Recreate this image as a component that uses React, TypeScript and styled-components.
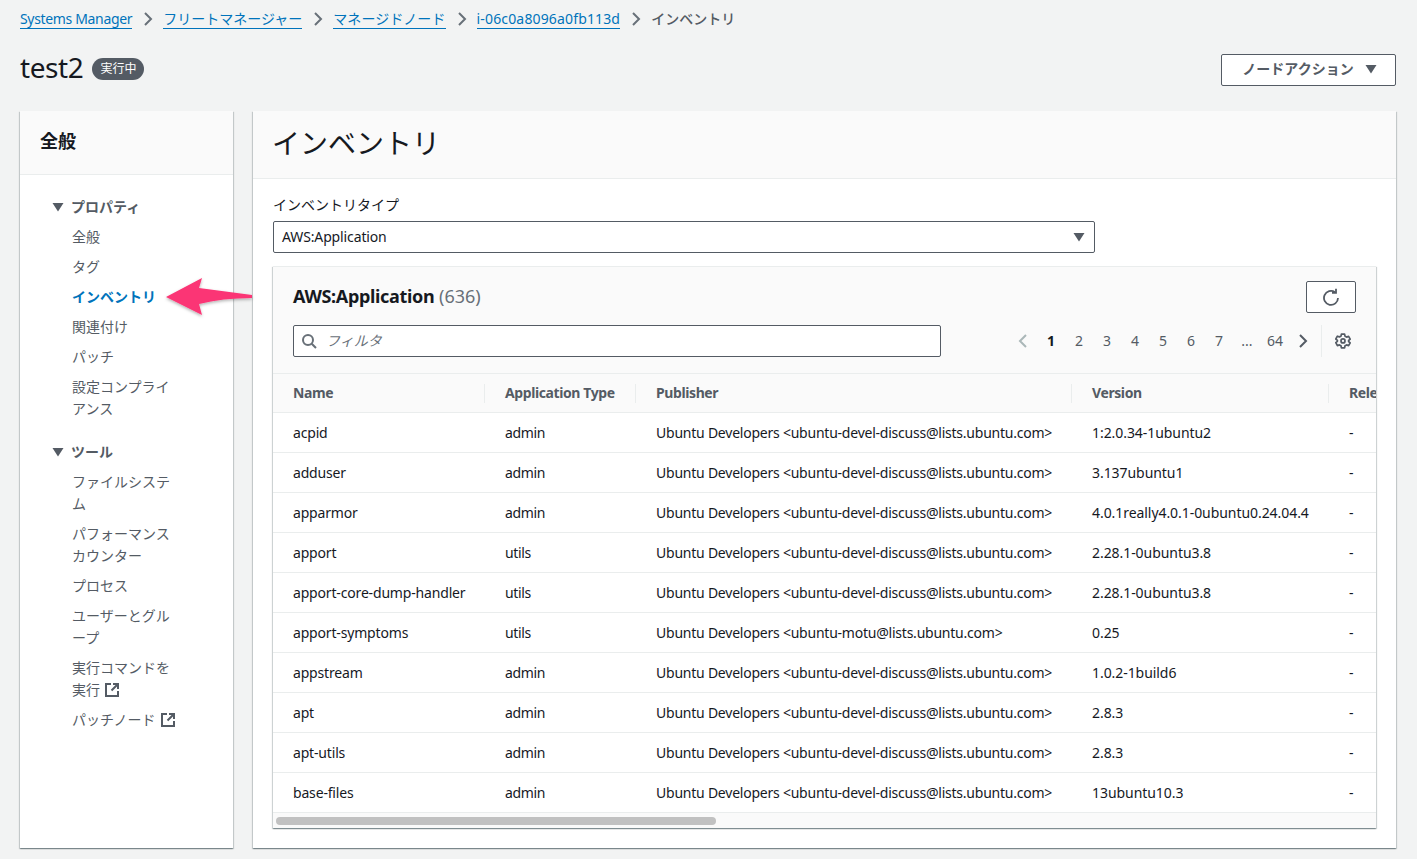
import React from 'react';
import styled, { createGlobalStyle } from 'styled-components';

const FONT = `"Noto Sans", "Noto Sans CJK JP", sans-serif`;

const Global = createGlobalStyle`
  html, body { margin: 0; padding: 0; background: #f2f3f3; }
  body { font-family: ${FONT}; font-size: 14px; line-height: 20px; color: #16191f; overflow: hidden; }
  * { box-sizing: border-box; }
`;

const Page = styled.div`
  width: 1417px;
  height: 859px;
  padding: 9px 21px 0 20px;
  position: relative;
  display: flex;
  flex-direction: column;
`;

const Crumbs = styled.nav`
  display: flex;
  align-items: center;
  height: 20px;
`;
const CrumbLink = styled.a<{ $spacing?: number }>`
  color: #0073bb;
  font-size: 14px;
  line-height: 19px;
  letter-spacing: ${p => p.$spacing ?? 0}px;
  border-bottom: 1px solid #0073bb;
  white-space: nowrap;
`;
const CrumbCurrent = styled.span`
  color: #545b64;
  font-size: 14px;
  font-weight: 500;
  white-space: nowrap;
`;
const CrumbSep = styled.svg`
  width: 16px;
  height: 16px;
  margin: 0 7px 0 8px;
  fill: none;
  stroke: #687078;
  stroke-width: 2;
`;

const TitleRow = styled.div`
  display: flex;
  align-items: center;
  justify-content: space-between;
  height: 32px;
  margin-top: 24px;
`;
const TitleLeft = styled.div`
  display: flex;
  align-items: center;
  gap: 9px;
  padding-bottom: 3px;
`;
const Title = styled.h1`
  margin: 0;
  font-size: 28px;
  line-height: 36px;
  font-weight: 400;
  letter-spacing: -0.4px;
  color: #16191f;
  position: relative;
  top: -1px;
`;
const Badge = styled.span`
  background: #545b64;
  color: #fff;
  font-size: 12px;
  line-height: 21px;
  height: 22px;
  margin-top: 2px;
  padding: 0 8px;
  border-radius: 11px;
`;
const ActionButton = styled.button`
  width: 175px;
  height: 32px;
  margin-top: 2px;
  padding: 0 0 2px 2px;
  background: #fff;
  border: 1px solid #545b64;
  border-radius: 2px;
  color: #545b64;
  font: 700 14px/20px ${FONT};
  display: flex;
  align-items: center;
  justify-content: center;
  gap: 11px;
`;
const Caret = styled.svg<{ $size?: number }>`
  width: ${p => p.$size ?? 12}px;
  height: ${p => p.$size ?? 12}px;
  fill: #545b64;
  flex: none;
`;

const Columns = styled.div`
  display: flex;
  gap: 20px;
  margin-top: 26px;
  height: 737px;
`;
const Card = styled.section`
  background: #fff;
  box-shadow: 0 1px 1px 0 rgba(0, 28, 36, 0.3), 1px 1px 1px 0 rgba(0, 28, 36, 0.15), -1px 1px 1px 0 rgba(0, 28, 36, 0.15);
  display: flex;
  flex-direction: column;
  overflow: hidden;
`;
const Side = styled(Card)`
  width: 213px;
  flex: none;
`;
const Main = styled(Card)`
  flex: 1;
  min-width: 0;
`;
const SideHead = styled.div`
  height: 64px;
  background: #fafafa;
  border-bottom: 1px solid #eaeded;
  padding: 0 20px 4px;
  display: flex;
  align-items: center;
  font-size: 18px;
  font-weight: 700;
  color: #16191f;
`;
const SideBody = styled.div`
  padding: 21px 0 0 32px;
`;
const GroupTitle = styled.div`
  display: flex;
  align-items: center;
  gap: 7px;
  font-weight: 700;
  color: #545b64;
  font-size: 14px;
  line-height: 22px;
`;
const NavList = styled.ul`
  list-style: none;
  margin: 0 0 17px;
  padding: 4px 0 0 20px;
  width: 125px;
`;
const NavItem = styled.li<{ $active?: boolean; $nowrap?: boolean }>`
  font-size: 14px;
  line-height: 22px;
  padding: 4px 0;
  color: ${p => (p.$active ? '#0073bb' : '#545b64')};
  font-weight: ${p => (p.$active ? 700 : 400)};
  white-space: ${p => (p.$nowrap ? 'nowrap' : 'normal')};
`;
const ExtIcon = styled.svg`
  width: 16px;
  height: 16px;
  display: inline-block;
  vertical-align: -3px;
  margin-left: 4px;
  fill: none;
  stroke: #545b64;
  stroke-width: 2;
`;

const MainHead = styled.div`
  height: 68px;
  background: #fafafa;
  border-bottom: 1px solid #eaeded;
  padding: 0 20px 4px;
  display: flex;
  align-items: center;
`;
const MainTitle = styled.h2`
  margin: 0 0 0 -1px;
  font-size: 28px;
  line-height: 36px;
  font-weight: 400;
  color: #16191f;
`;
const MainBody = styled.div`
  padding: 16px 20px 0;
  display: flex;
  flex-direction: column;
`;
const Label = styled.label`
  font-size: 14px;
  line-height: 20px;
  color: #16191f;
`;
const SelectBox = styled.div`
  margin-top: 6px;
  width: 822px;
  height: 32px;
  background: #fff;
  border: 1px solid #545b64;
  border-radius: 2px;
  display: flex;
  align-items: center;
  justify-content: space-between;
  padding: 0 9px 0 8px;
  font-size: 14px;
  letter-spacing: -0.13px;
  color: #16191f;
`;
const TableCard = styled.div`
  margin-top: 13px;
  width: 1103px;
  height: 562px;
  background: #fff;
  box-shadow: 0 1px 1px 0 rgba(0, 28, 36, 0.3), 1px 1px 1px 0 rgba(0, 28, 36, 0.15), -1px 1px 1px 0 rgba(0, 28, 36, 0.15);
  border-top: 1px solid #eaeded;
  display: flex;
  flex-direction: column;
  overflow: hidden;
`;
const TableHead = styled.div`
  background: #fafafa;
  height: 107px;
  flex: none;
  padding: 14px 20px 0;
  border-bottom: 1px solid #eaeded;
`;
const HeadRow = styled.div`
  display: flex;
  align-items: center;
  justify-content: space-between;
`;
const TableTitle = styled.div`
  font-size: 18px;
  line-height: 32px;
  font-weight: 700;
  color: #16191f;
  position: relative;
  top: -1px;
`;
const TitleName = styled.span`
  letter-spacing: -0.33px;
`;
const Count = styled.span`
  font-weight: 400;
  color: #687078;
`;
const RefreshButton = styled.button`
  width: 50px;
  height: 32px;
  background: #fff;
  border: 1px solid #545b64;
  border-radius: 2px;
  display: flex;
  align-items: center;
  justify-content: center;
  padding: 0;
`;
const ToolRow = styled(HeadRow)`
  margin-top: 12px;
`;
const FilterBox = styled.div`
  width: 648px;
  height: 32px;
  background: #fff;
  border: 1px solid #545b64;
  border-radius: 2px;
  display: flex;
  align-items: center;
  gap: 9px;
  padding: 0 7px;
  color: #687078;
  font-style: italic;
  font-size: 14px;
`;
const Pager = styled.div`
  display: flex;
  align-items: center;
  height: 32px;
`;
const PageNum = styled.span<{ $active?: boolean }>`
  width: 28px;
  text-align: center;
  font-size: 14px;
  color: ${p => (p.$active ? '#16191f' : '#545b64')};
  font-weight: ${p => (p.$active ? 700 : 400)};
`;
const PagerArrow = styled.svg<{ $disabled?: boolean; $side: 'left' | 'right' }>`
  width: 16px;
  height: 16px;
  fill: none;
  stroke: ${p => (p.$disabled ? '#aab7b8' : '#545b64')};
  stroke-width: 2;
  flex: none;
  margin-${p => (p.$side === 'left' ? 'right' : 'left')}: 6px;
`;
const SettingsWrap = styled.div`
  margin-left: 10px;
  width: 35px;
  height: 32px;
  border-left: 1px solid #eaeded;
  display: flex;
  align-items: center;
  padding-left: 13px;
`;
const Scroller = styled.div`
  flex: 1;
  overflow: hidden;
`;
const Grid = styled.div`
  display: grid;
  grid-template-columns: 212px 151px 436px 257px 100px;
`;
const HeadCell = styled.div<{ $last?: boolean }>`
  height: 39px;
  background: #fafafa;
  border-bottom: 1px solid #eaeded;
  padding: 0 20px;
  display: flex;
  align-items: center;
  font-weight: 700;
  color: #545b64;
  font-size: 14px;
  letter-spacing: -0.4px;
  position: relative;
  white-space: nowrap;
  &::after {
    content: '';
    position: absolute;
    right: 0;
    top: 10px;
    bottom: 9px;
    width: 1px;
    background: ${p => (p.$last ? 'transparent' : '#eaeded')};
  }
`;
const Cell = styled.div<{ $spacing?: number }>`
  height: 40px;
  border-bottom: 1px solid #eaeded;
  padding: 0 20px;
  display: flex;
  align-items: center;
  font-size: 14px;
  letter-spacing: ${p => p.$spacing ?? 0}px;
  color: #16191f;
  white-space: nowrap;
`;
const ScrollTrack = styled.div`
  height: 15px;
  flex: none;
  background: #fafafa;
  padding: 4px 3px 0;
`;
const ScrollThumb = styled.div`
  width: 440px;
  height: 8px;
  border-radius: 4px;
  background: #c1c1c1;
`;
const ArrowOverlay = styled.svg`
  position: absolute;
  left: 160px;
  top: 272px;
  width: 96px;
  height: 48px;
  overflow: visible;
`;

const Chevron = () => (
  <CrumbSep viewBox="0 0 16 16"><path d="M5 2l6 6-6 6" /></CrumbSep>
);
const External = () => (
  <ExtIcon viewBox="0 0 16 16">
    <path d="M7 2H2v12h12V9" />
    <path d="M9 2h5v5M14 2L7.5 8.5" />
  </ExtIcon>
);

const rows: [string, string, string, string][] = [
  ['acpid', 'admin', 'Ubuntu Developers <ubuntu-devel-discuss@lists.ubuntu.com>', '1:2.0.34-1ubuntu2'],
  ['adduser', 'admin', 'Ubuntu Developers <ubuntu-devel-discuss@lists.ubuntu.com>', '3.137ubuntu1'],
  ['apparmor', 'admin', 'Ubuntu Developers <ubuntu-devel-discuss@lists.ubuntu.com>', '4.0.1really4.0.1-0ubuntu0.24.04.4'],
  ['apport', 'utils', 'Ubuntu Developers <ubuntu-devel-discuss@lists.ubuntu.com>', '2.28.1-0ubuntu3.8'],
  ['apport-core-dump-handler', 'utils', 'Ubuntu Developers <ubuntu-devel-discuss@lists.ubuntu.com>', '2.28.1-0ubuntu3.8'],
  ['apport-symptoms', 'utils', 'Ubuntu Developers <ubuntu-motu@lists.ubuntu.com>', '0.25'],
  ['appstream', 'admin', 'Ubuntu Developers <ubuntu-devel-discuss@lists.ubuntu.com>', '1.0.2-1build6'],
  ['apt', 'admin', 'Ubuntu Developers <ubuntu-devel-discuss@lists.ubuntu.com>', '2.8.3'],
  ['apt-utils', 'admin', 'Ubuntu Developers <ubuntu-devel-discuss@lists.ubuntu.com>', '2.8.3'],
  ['base-files', 'admin', 'Ubuntu Developers <ubuntu-devel-discuss@lists.ubuntu.com>', '13ubuntu10.3'],
];

const Down = ({ size = 12 }: { size?: number }) => (
  <Caret $size={size} viewBox="0 0 12 12"><path d="M0.5 2h11L6 10.5z" /></Caret>
);

export default function App() {
  return (
    <Page>
      <Global />
      <Crumbs>
        <CrumbLink $spacing={-0.34}>Systems Manager</CrumbLink>
        <Chevron />
        <CrumbLink>フリートマネージャー</CrumbLink>
        <Chevron />
        <CrumbLink $spacing={0.12}>マネージドノード</CrumbLink>
        <Chevron />
        <CrumbLink $spacing={0.15}>i-06c0a8096a0fb113d</CrumbLink>
        <Chevron />
        <CrumbCurrent>インベントリ</CrumbCurrent>
      </Crumbs>
      <TitleRow>
        <TitleLeft>
          <Title>test2</Title>
          <Badge>実行中</Badge>
        </TitleLeft>
        <ActionButton>ノードアクション <Down /></ActionButton>
      </TitleRow>
      <Columns>
        <Side>
          <SideHead>全般</SideHead>
          <SideBody>
            <GroupTitle><Down size={12} />プロパティ</GroupTitle>
            <NavList>
              <NavItem>全般</NavItem>
              <NavItem>タグ</NavItem>
              <NavItem $active>インベントリ</NavItem>
              <NavItem>関連付け</NavItem>
              <NavItem>パッチ</NavItem>
              <NavItem>設定コンプライアンス</NavItem>
            </NavList>
            <GroupTitle><Down size={12} />ツール</GroupTitle>
            <NavList>
              <NavItem>ファイルシステム</NavItem>
              <NavItem>パフォーマンスカウンター</NavItem>
              <NavItem>プロセス</NavItem>
              <NavItem>ユーザーとグループ</NavItem>
              <NavItem>実行コマンドを実行<External /></NavItem>
              <NavItem $nowrap>パッチノード<External /></NavItem>
            </NavList>
          </SideBody>
        </Side>
        <Main>
          <MainHead><MainTitle>インベントリ</MainTitle></MainHead>
          <MainBody>
            <Label>インベントリタイプ</Label>
            <SelectBox>AWS:Application<Down /></SelectBox>
            <TableCard>
              <TableHead>
                <HeadRow>
                  <TableTitle><TitleName>AWS:Application</TitleName> <Count>(636)</Count></TableTitle>
                  <RefreshButton aria-label="refresh">
                    <svg width="18" height="18" viewBox="0 0 18 18" fill="none" stroke="#545b64" strokeWidth="1.8">
                      <path d="M16 10a7 7 0 1 1-3-5.8" />
                      <path d="M14 0.800V4.800H10" />
                    </svg>
                  </RefreshButton>
                </HeadRow>
                <ToolRow>
                  <FilterBox>
                    <svg width="16" height="16" viewBox="0 0 16 16" fill="none" stroke="#687078" strokeWidth="2">
                      <circle cx="7" cy="7" r="5" />
                      <path d="M10.700 10.700L15 15" />
                    </svg>
                    フィルタ
                  </FilterBox>
                  <Pager>
                    <PagerArrow $side="left" $disabled viewBox="0 0 16 16"><path d="M11 2L5 8l6 6" /></PagerArrow>
                    {['1', '2', '3', '4', '5', '6', '7', '...', '64'].map((n, i) => (
                      <PageNum key={n} $active={i === 0}>{n}</PageNum>
                    ))}
                    <PagerArrow $side="right" viewBox="0 0 16 16"><path d="M5 2l6 6-6 6" /></PagerArrow>
                    <SettingsWrap>
                      <svg width="16" height="16" viewBox="0 0 16 16" fill="none" stroke="#545b64" strokeWidth="1.7" strokeLinejoin="round">
                        <path d="M6.400 1.200h3.200l.4 2 1.600.9 2-.7 1.600 2.800-1.600 1.300v1l1.600 1.300-1.600 2.800-2-.7-1.600.9-.4 2H6.400l-.4-2-1.600-.9-2 .7L.8 9.600l1.600-1.300v-1L.8 6l1.600-2.800 2 .7L6 3.200z" />
                        <circle cx="8" cy="7.900" r="2" />
                      </svg>
                    </SettingsWrap>
                  </Pager>
                </ToolRow>
              </TableHead>
              <Scroller>
                <Grid>
                  <HeadCell>Name</HeadCell>
                  <HeadCell>Application Type</HeadCell>
                  <HeadCell>Publisher</HeadCell>
                  <HeadCell>Version</HeadCell>
                  <HeadCell $last>Release</HeadCell>
                  {rows.map(r => (
                    <React.Fragment key={r[0]}>
                      <Cell $spacing={-0.17}>{r[0]}</Cell>
                      <Cell $spacing={-0.35}>{r[1]}</Cell>
                      <Cell $spacing={-0.23}>{r[2]}</Cell>
                      <Cell $spacing={-0.06}>{r[3]}</Cell>
                      <Cell>-</Cell>
                    </React.Fragment>
                  ))}
                </Grid>
              </Scroller>
              <ScrollTrack><ScrollThumb /></ScrollTrack>
            </TableCard>
          </MainBody>
        </Main>
      </Columns>
      <ArrowOverlay viewBox="0 0 96 48">
        <defs>
          <filter id="arrowShadow" x="-20%" y="-30%" width="140%" height="170%">
            <feDropShadow dx="0" dy="1.500" stdDeviation="1.500" floodColor="#000" floodOpacity="0.3" />
          </filter>
        </defs>
        <path
          d="M6 25L42 6 39 16L92 23V26Q62 26 39 32L42 43z"
          fill="#fb3474"
          filter="url(#arrowShadow)"
        />
      </ArrowOverlay>
    </Page>
  );
}
